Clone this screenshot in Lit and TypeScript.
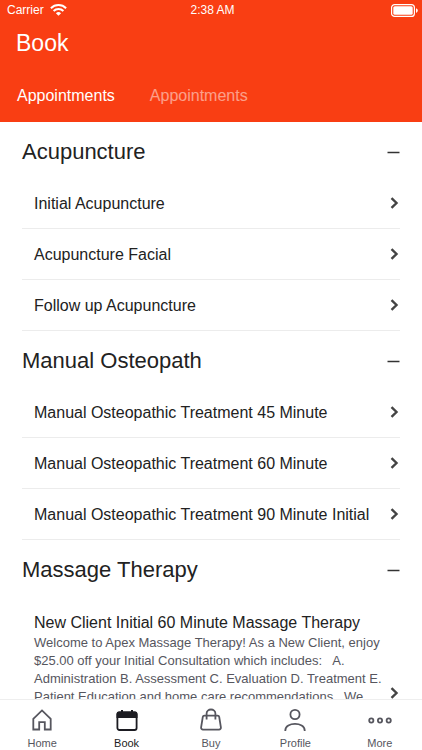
import { LitElement, html, css, svg, TemplateResult } from "lit";
import { customElement, property, state } from "lit/decorators.js";
import { classMap } from "lit/directives/class-map.js";

interface Service {
  name: string;
  description?: string;
}

interface Category {
  name: string;
  services: Service[];
}

const categories: Category[] = [
  {
    name: "Acupuncture",
    services: [
      { name: "Initial Acupuncture" },
      { name: "Acupuncture Facial" },
      { name: "Follow up Acupuncture" },
    ],
  },
  {
    name: "Manual Osteopath",
    services: [
      { name: "Manual Osteopathic Treatment 45 Minute" },
      { name: "Manual Osteopathic Treatment 60 Minute" },
      { name: "Manual Osteopathic Treatment 90 Minute Initial" },
    ],
  },
  {
    name: "Massage Therapy",
    services: [
      {
        name: "New Client Initial 60 Minute Massage Therapy",
        description:
          "Welcome to Apex Massage Therapy! As a New Client, enjoy\n" +
          "$25.00 off your Initial Consultation which includes:   A.\n" +
          "Administration B. Assessment C. Evaluation D. Treatment E.\n" +
          "Patient Education and home care recommendations.  We",
      },
    ],
  },
];

const navItems: { label: string; icon: TemplateResult }[] = [
  {
    label: "Home",
    icon: svg`<path d="M3.300 10.800 12 2.400l8.700 8.400v10.700h-5.900v-7.300H9.200v7.300H3.300z" />`,
  },
  {
    label: "Book",
    icon: svg`<rect x="2.400" y="4.400" width="19.200" height="17.600" rx="2" />
      <path class="solid" d="M1.500 5.900a2.400 2.400 0 0 1 2.400-2.400H6V2h2v1.500h8V2h2v1.500h2.100a2.400 2.400 0 0 1 2.400 2.400V10h-21z" />`,
  },
  {
    label: "Buy",
    icon: svg`<path d="M5.400 7.600h13.200a1.600 1.600 0 0 1 1.600 1.300l1.700 10.500a1.900 1.900 0 0 1-1.900 2.200H4a1.900 1.900 0 0 1-1.900-2.200L3.800 8.900a1.600 1.600 0 0 1 1.600-1.300z" />
      <path d="M7.600 11.600V5.400a4.400 3.900 0 0 1 8.800 0v6.200" />`,
  },
  {
    label: "Profile",
    icon: svg`<circle cx="12" cy="6.500" r="4.600" /><path d="M2.300 23v-.6c0-8.600 19.400-8.600 19.400 0v.6" />`,
  },
  {
    label: "More",
    icon: svg`<circle cx="3.300" cy="12.500" r="2.100" /><circle cx="12" cy="12.500" r="2.100" /><circle cx="20.700" cy="12.500" r="2.100" />`,
  },
];

@customElement("status-bar")
export class StatusBar extends LitElement {
  static styles = css`
    :host {
      display: grid;
      grid-template-columns: 1fr auto 1fr;
      align-items: center;
      height: 20px;
      padding: 0 4px 0 7px;
      font-size: 12px;
    }
    .carrier {
      display: flex;
      align-items: center;
      gap: 6px;
    }
    .wifi {
      width: 17px;
      height: 12px;
    }
    .battery {
      width: 27px;
      height: 13px;
      justify-self: end;
    }
  `;

  render() {
    return html`
      <div class="carrier">
        <span>Carrier</span>
        <svg class="wifi" viewBox="0 0 17 12" fill="none" stroke="currentColor" stroke-width="2" aria-hidden="true">
          <path d="M.9 4.200a10.800 10.800 0 0 1 15.200 0" />
          <path d="M3.600 7a7 7 0 0 1 9.800 0" />
          <path d="M8.500 11.800 5.900 9.200a3.700 3.700 0 0 1 5.200 0z" fill="currentColor" stroke="none" />
        </svg>
      </div>
      <time>2:38 AM</time>
      <svg class="battery" viewBox="0 0 27 13" aria-hidden="true">
        <rect x=".6" y=".6" width="22.800" height="11.800" rx="3" fill="none" stroke="currentColor" stroke-width="1.200" />
        <rect x="2.300" y="2.300" width="19.400" height="8.400" rx="1.500" fill="currentColor" />
        <path d="M25 4.200c2.400.8 2.400 3.800 0 4.600z" fill="currentColor" />
      </svg>
    `;
  }
}

@customElement("service-category")
export class ServiceCategory extends LitElement {
  @property({ attribute: false }) category!: Category;
  @state() private open = true;

  static styles = css`
    :host {
      display: block;
      padding: 0 22px;
    }
    button {
      display: flex;
      align-items: center;
      justify-content: space-between;
      width: 100%;
      box-sizing: border-box;
      border: 0;
      background: none;
      font: inherit;
      color: inherit;
      text-align: left;
      cursor: pointer;
    }
    h2 {
      margin: 0;
      font-weight: 400;
    }
    .heading {
      height: 56px;
      padding: 4px 0 0;
      font-size: 22px;
    }
    .toggle {
      width: 13px;
      height: 13px;
      fill: none;
      stroke: #333;
      stroke-width: 1.5;
    }
    ul {
      list-style: none;
      margin: 0;
      padding: 0;
    }
    li {
      border-bottom: 1px solid #ececec;
    }
    .service {
      min-height: 50px;
      padding: 0 0 0 12px;
      font-size: 16px;
      line-height: 20px;
    }
    .text {
      padding-top: 2px;
    }
    .detailed {
      min-height: 194px;
    }
    .detailed .text {
      align-self: flex-start;
      padding-top: 17px;
    }
    .name,
    .description {
      display: block;
      white-space: pre;
    }
    .description {
      padding-top: 1px;
      font-size: 13px;
      line-height: 18px;
      color: #56565e;
    }
    .chevron {
      flex: none;
      width: 9px;
      height: 12px;
      margin-right: 1px;
      fill: none;
      stroke: #444;
      stroke-width: 2.4;
    }
  `;

  render() {
    const { name, services } = this.category;
    return html`
      <h2>
        <button class="heading" aria-expanded=${this.open} @click=${() => (this.open = !this.open)}>
          <span>${name}</span>
          <svg class="toggle" viewBox="0 0 13 13" aria-hidden="true">
            <path d=${this.open ? "M.5 6.500h12" : "M.5 6.500h12M6.500.5v12"} />
          </svg>
        </button>
      </h2>
      ${this.open
        ? html`<ul>
            ${services.map(
              (service) => html`<li>
                <button class=${classMap({ service: true, detailed: !!service.description })}>
                  <span class="text">
                    <span class="name">${service.name}</span>
                    ${service.description ? html`<span class="description">${service.description}</span>` : ""}
                  </span>
                  <svg class="chevron" viewBox="0 0 9 12" aria-hidden="true"><path d="M1.500 1.200 6.500 6l-5 4.800" /></svg>
                </button>
              </li>`
            )}
          </ul>`
        : ""}
    `;
  }
}

@customElement("app-root")
export class AppRoot extends LitElement {
  @state() private tab = 0;
  @state() private current = "Book";

  static styles = css`
    :host {
      display: flex;
      flex-direction: column;
      height: 100vh;
      background: #fff;
      color: #222;
      font-family: "Liberation Sans", Arial, sans-serif;
    }
    button {
      border: 0;
      background: none;
      font: inherit;
      color: inherit;
      cursor: pointer;
    }
    header {
      flex: none;
      background: #f93e13;
      color: #fff;
    }
    h1 {
      margin: 0;
      padding: 0 16px;
      font-size: 23px;
      font-weight: 400;
      line-height: 46px;
    }
    .tabs {
      display: flex;
      gap: 35px;
      padding: 0 17px;
    }
    .tab {
      height: 56px;
      padding: 4px 0 0;
      font-size: 16px;
      opacity: 0.5;
    }
    .tab.selected {
      opacity: 1;
    }
    main {
      flex: 1;
      min-height: 0;
      overflow: hidden auto;
      scrollbar-width: none;
    }
    nav {
      flex: none;
      display: grid;
      grid-template-columns: repeat(5, 1fr);
      border-top: 1px solid #eee;
      background: #fff;
    }
    .nav-item {
      display: flex;
      flex-direction: column;
      align-items: center;
      gap: 4px;
      height: 50px;
      padding: 8px 0 0;
      font-size: 11px;
      line-height: 14px;
      color: #56565e;
    }
    .nav-item.current {
      color: #1c1c22;
    }
    .nav-item svg {
      width: 24px;
      height: 24px;
      fill: none;
      stroke: currentColor;
      stroke-width: 1.8;
    }
    .solid {
      fill: currentColor;
      stroke: none;
    }
  `;

  render() {
    return html`
      <header>
        <status-bar></status-bar>
        <h1>Book</h1>
        <div class="tabs" role="tablist">
          ${["Appointments", "Appointments"].map(
            (label, i) => html`<button
              class=${classMap({ tab: true, selected: this.tab === i })}
              role="tab"
              aria-selected=${this.tab === i}
              @click=${() => (this.tab = i)}
            >${label}</button>`
          )}
        </div>
      </header>
      <main>
        ${categories.map((c) => html`<service-category .category=${c}></service-category>`)}
      </main>
      <nav>
        ${navItems.map(
          ({ label, icon }) => html`<button
            class=${classMap({ "nav-item": true, current: this.current === label })}
            @click=${() => (this.current = label)}
          >
            <svg viewBox="0 0 24 24" aria-hidden="true">${icon}</svg>
            <span>${label}</span>
          </button>`
        )}
      </nav>
    `;
  }
}
